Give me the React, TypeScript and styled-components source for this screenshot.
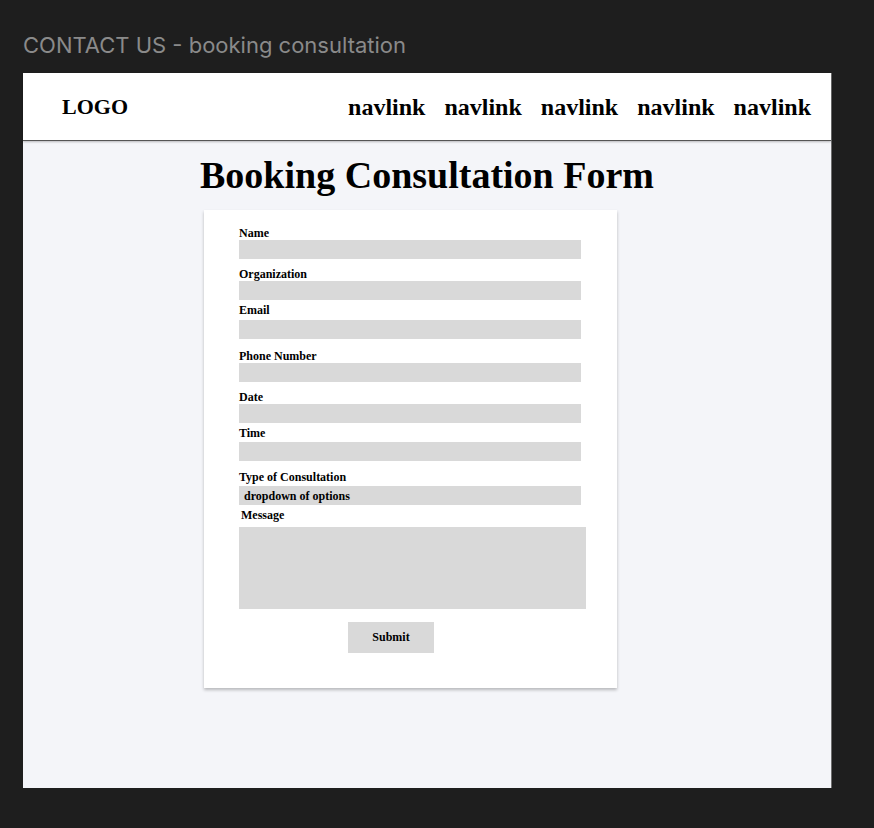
import React from 'react';
import styled, { createGlobalStyle } from 'styled-components';

const GlobalStyle = createGlobalStyle`
  html, body {
    margin: 0;
    padding: 0;
    background-color: #1e1e1e;
  }
`;

const Page = styled.div`
  padding: 32px 0 0 23px;
  min-height: 828px;
  box-sizing: border-box;
`;

const FrameTitle = styled.div`
  font-family: Inter, 'Liberation Sans', sans-serif;
  font-size: 22px;
  line-height: 26px;
  color: #8a8a8a;
  margin-bottom: 15px;
`;

const Frame = styled.div`
  width: 809px;
  height: 715px;
  background-color: #f4f5f9;
  border-right: 1px solid #6e6e6e;
  box-sizing: border-box;
  font-family: 'Liberation Serif', 'Times New Roman', serif;
  font-weight: 700;
  color: #000;
`;

const Header = styled.header`
  height: 68px;
  background-color: white;
  display: flex;
  align-items: center;
  justify-content: space-between;
  padding: 1px 20px 0 39px;
  border-bottom: 1px solid #555;
  box-shadow: 0 1px 2px rgb(0 0 0 / 0.25);
  box-sizing: border-box;
`;

const Logo = styled.div`
  font-size: 22px;
`;

const Nav = styled.nav`
  display: flex;
  gap: 19px;
  font-size: 24px;
`;

const Main = styled.main`
  display: flex;
  flex-direction: column;
  padding-top: 11px;
`;

const Heading = styled.h1`
  margin: 0;
  font-size: 38px;
  line-height: 47px;
  text-align: center;
`;

const Card = styled.form`
  width: 413px;
  margin: 11px 0 0 181px;
  padding: 17px 0 35px 35px;
  background-color: white;
  box-shadow: 0 2px 3px rgb(0 0 0 / 0.25);
  box-sizing: border-box;
  display: flex;
  flex-direction: column;
`;

const Label = styled.label<{ $top: number; $left?: number }>`
  display: block;
  font-size: 12px;
  line-height: 13px;
  margin-top: ${(p) => p.$top}px;
  margin-left: ${(p) => p.$left ?? 0}px;
`;

const Input = styled.div<{ $gap?: number; $width?: number; $height?: number }>`
  width: ${(p) => p.$width ?? 342}px;
  height: ${(p) => p.$height ?? 19}px;
  margin-top: ${(p) => p.$gap ?? 0}px;
  background-color: #d9d9d9;
  font-size: 12px;
  line-height: 20px;
  padding-left: 5px;
  box-sizing: border-box;
`;

const SubmitButton = styled.div`
  width: 86px;
  height: 31px;
  margin: 13px 0 0 109px;
  background-color: #d9d9d9;
  display: grid;
  place-items: center;
  font-size: 12px;
`;

const fields = [
  { label: 'Name', top: 0, gap: 0 },
  { label: 'Organization', top: 9, gap: 0 },
  { label: 'Email', top: 4, gap: 3 },
  { label: 'Phone Number', top: 11, gap: 0 },
  { label: 'Date', top: 9, gap: 0 },
  { label: 'Time', top: 4, gap: 2 },
];

function App() {
  return (
    <Page>
      <GlobalStyle />
      <FrameTitle>CONTACT US - booking consultation</FrameTitle>
      <Frame>
        <Header>
          <Logo>LOGO</Logo>
          <Nav>
            {[0, 1, 2, 3, 4].map((i) => (
              <span key={i}>navlink</span>
            ))}
          </Nav>
        </Header>
        <Main>
          <Heading>Booking Consultation Form</Heading>
          <Card>
            {fields.map((f) => (
              <React.Fragment key={f.label}>
                <Label $top={f.top}>{f.label}</Label>
                <Input $gap={f.gap} />
              </React.Fragment>
            ))}
            <Label $top={10}>Type of Consultation</Label>
            <Input $gap={2}>dropdown of options</Input>
            <Label $top={4} $left={2}>
              Message
            </Label>
            <Input $gap={5} $width={347} $height={82} />
            <SubmitButton>Submit</SubmitButton>
          </Card>
        </Main>
      </Frame>
    </Page>
  );
}

export default App;
